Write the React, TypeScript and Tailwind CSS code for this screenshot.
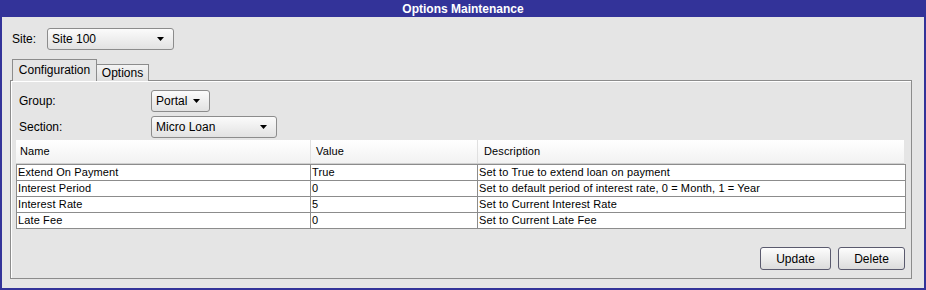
import React from "react";

const Caret = () => (
  <svg width="7" height="4" viewBox="0 0 7 4" className="shrink-0">
    <path d="M0 0 H7 L3.5 4 Z" fill="#000" />
  </svg>
);

function Select({ label, width }: { label: string; width: string }) {
  return (
    <div
      className={`${width} h-[22px] flex items-center justify-between pl-[4px] pr-[9px] border border-[#8c8c8c] rounded-[3px] bg-gradient-to-b from-[#fbfbfb] to-[#e2e2e2] text-[12px] text-black`}
    >
      <span>{label}</span>
      <Caret />
    </div>
  );
}

const rows = [
  ["Extend On Payment", "True", "Set to True to extend loan on payment"],
  ["Interest Period", "0", "Set to default period of interest rate, 0 = Month, 1 = Year"],
  ["Interest Rate", "5", "Set to Current Interest Rate"],
  ["Late Fee", "0", "Set to Current Late Fee"],
];

export default function App() {
  return (
    <div
      className="w-[926px] h-[290px] bg-[#333399] px-[2px] pb-[2px] flex flex-col"
      style={{ fontFamily: '"Liberation Sans", Arial, sans-serif' }}
    >
      <div className="h-[17px] flex items-center justify-center text-white font-bold text-[12px] leading-none">
        Options Maintenance
      </div>
      <div className="flex-1 bg-[#e5e5e5] flex flex-col">
        <div className="flex items-center mt-[11px] ml-[10px] h-[22px]">
          <span className="text-[12px] w-[35px] text-black">Site:</span>
          <Select label="Site 100" width="w-[127px]" />
        </div>
        <div className="flex items-end ml-[10px] mt-[9px] h-[22px] relative z-10">
          <div className="h-[22px] w-[85px] border border-b-0 border-[#8c8c8c] bg-[#e5e5e5] flex items-center justify-center text-[12px] text-black pb-[1px]">
            Configuration
          </div>
          <div className="h-[17px] w-[52px] border border-l-0 border-b-0 border-[#8c8c8c] bg-gradient-to-b from-[#f4f4f4] to-[#dedede] flex items-center justify-center text-[12px] text-black">
            Options
          </div>
        </div>
        <div className="ml-[8px] mr-[12px] mt-[-1px] h-[199px] border border-[#8c8c8c] shadow-[inset_1px_1px_0_#ffffff] flex flex-col px-[5px] pt-[9px]">
          <div className="flex items-center h-[22px]">
            <span className="text-[12px] text-black w-[135px] pl-[3px]">Group:</span>
            <Select label="Portal" width="w-[59px]" />
          </div>
          <div className="flex items-center h-[23px] mt-[3px]">
            <span className="text-[12px] text-black w-[135px] pl-[3px]">Section:</span>
            <Select label="Micro Loan" width="w-[126px]" />
          </div>
          <div className="mt-[2px] flex flex-col text-[11px] tracking-[0.12px] text-black">
            <div className="h-[24px] flex bg-gradient-to-b from-[#ffffff] to-[#f2f2f2] border-b border-[#d0d0d0] mr-[2px]">
              <div className="w-[295px] pl-[4px] flex items-center border-r border-[#e0e0e0]">Name</div>
              <div className="w-[167px] pl-[5px] flex items-center border-r border-[#e0e0e0]">Value</div>
              <div className="flex-1 pl-[6px] flex items-center">Description</div>
            </div>
            <div className="border-t border-l border-r border-[#8c8c8c] bg-white">
              {rows.map((r) => (
                <div key={r[0]} className="h-[16px] flex border-b border-[#8c8c8c]">
                  <div className="w-[294px] pl-[1px] flex items-center border-r border-[#8c8c8c]">{r[0]}</div>
                  <div className="w-[167px] pl-[1px] flex items-center border-r border-[#8c8c8c]">{r[1]}</div>
                  <div className="flex-1 pl-[1px] flex items-center">{r[2]}</div>
                </div>
              ))}
            </div>
          </div>
          <div className="flex justify-end gap-[7px] mt-[18px] mr-[1px]">
            <button className="w-[71px] h-[23px] border border-[#5a5a6e] rounded-[3px] bg-gradient-to-b from-[#fdfdfd] to-[#dcdcdc] text-[12px] text-black">
              Update
            </button>
            <button className="w-[67px] h-[23px] border border-[#5a5a6e] rounded-[3px] bg-gradient-to-b from-[#fdfdfd] to-[#dcdcdc] text-[12px] text-black">
              Delete
            </button>
          </div>
        </div>
      </div>
    </div>
  );
}
